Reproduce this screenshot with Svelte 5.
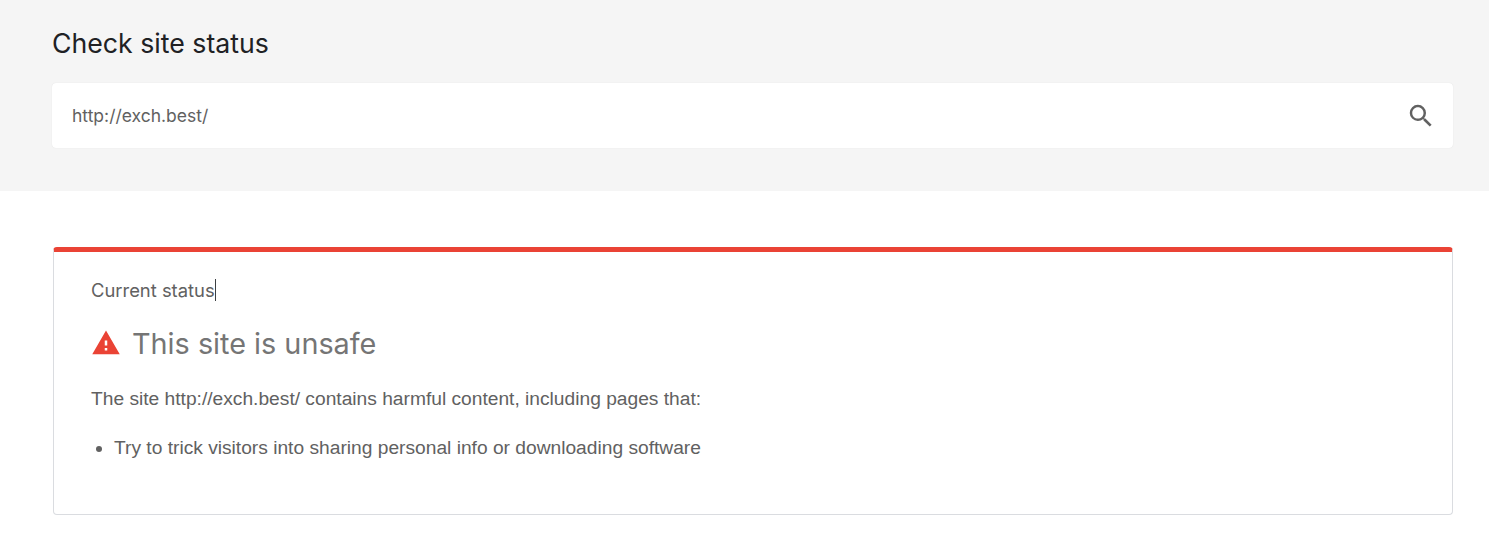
<script>
  const url = 'http://exch.best/';
</script>

<div class="page">
  <header class="top">
    <h1>Check site status</h1>
    <div class="search">
      <span class="url">{url}</span>
      <svg class="search-icon" viewBox="0 0 24 24" width="30" height="30" aria-hidden="true">
        <path d="M15.5 14h-.79l-.28-.27A6.47 6.47 0 0 0 16 9.5 6.5 6.5 0 1 0 9.5 16c1.61 0 3.09-.59 4.23-1.57l.27.28v.79l5 4.99L20.49 19l-4.99-5zm-6 0C7.01 14 5 11.99 5 9.5S7.01 5 9.5 5 14 7.01 14 9.5 11.99 14 9.5 14z" />
      </svg>
    </div>
  </header>

  <section class="card">
    <div class="label"><span class="label-text">Current status</span></div>
    <div class="verdict">
      <svg class="warn" viewBox="0 0 24 24" width="30" height="30" aria-hidden="true">
        <path d="M1 21h22L12 2 1 21zm12-3h-2v-2h2v2zm0-4h-2v-4h2v4z" />
      </svg>
      <h2>This site is unsafe</h2>
    </div>
    <p>The site {url} contains harmful content, including pages that:</p>
    <ul>
      <li>Try to trick visitors into sharing personal info or downloading software</li>
    </ul>
  </section>
</div>

<style>
  :global(body) {
    margin: 0;
    background: #fff;
  }

  .page {
    font-family: "Liberation Sans", Arial, sans-serif;
    color: #616161;
  }

  .top {
    background: #f5f5f5;
    height: 191px;
    padding: 0 36px 0 52px;
    box-sizing: border-box;
  }

  h1 {
    margin: 0;
    padding-top: 26px;
    font-family: Inter, sans-serif;
    font-size: 26.7px;
    line-height: 34px;
    font-weight: 400;
    color: #202124;
  }

  .search {
    display: flex;
    align-items: center;
    justify-content: space-between;
    margin-top: 23px;
    height: 65px;
    padding: 0 17px 0 20px;
    background: #fff;
    border-radius: 4px;
    box-shadow: 0 0 1px rgba(0, 0, 0, 0.12);
    box-sizing: border-box;
  }

  .url {
    font-family: Inter, sans-serif;
    font-size: 17.5px;
    color: #616161;
  }

  .search-icon {
    fill: #616161;
    display: block;
  }

  .card {
    margin: 56px 36px 0 53px;
    height: 268px;
    box-sizing: border-box;
    border: 1px solid #dadce0;
    border-top: 5px solid #ea4335;
    border-radius: 4px;
    padding: 26px 37px 0;
  }

  .label {
    font-family: Inter, sans-serif;
    font-size: 18.4px;
    line-height: 24px;
  }

  .label-text {
    border-right: 1px solid #3c4043;
  }

  .verdict {
    display: flex;
    align-items: center;
    gap: 11px;
    margin-top: 21px;
    height: 40px;
  }

  .warn {
    fill: #ea4335;
    display: block;
  }

  h2 {
    margin: 0;
    font-family: Inter, sans-serif;
    font-size: 28.8px;
    font-weight: 400;
    color: #757575;
  }

  p {
    margin: 22px 0 0;
    font-size: 19.2px;
    line-height: 28px;
  }

  ul {
    margin: 21px 0 0;
    padding-left: 23px;
    font-size: 19.2px;
    line-height: 28px;
  }
</style>
